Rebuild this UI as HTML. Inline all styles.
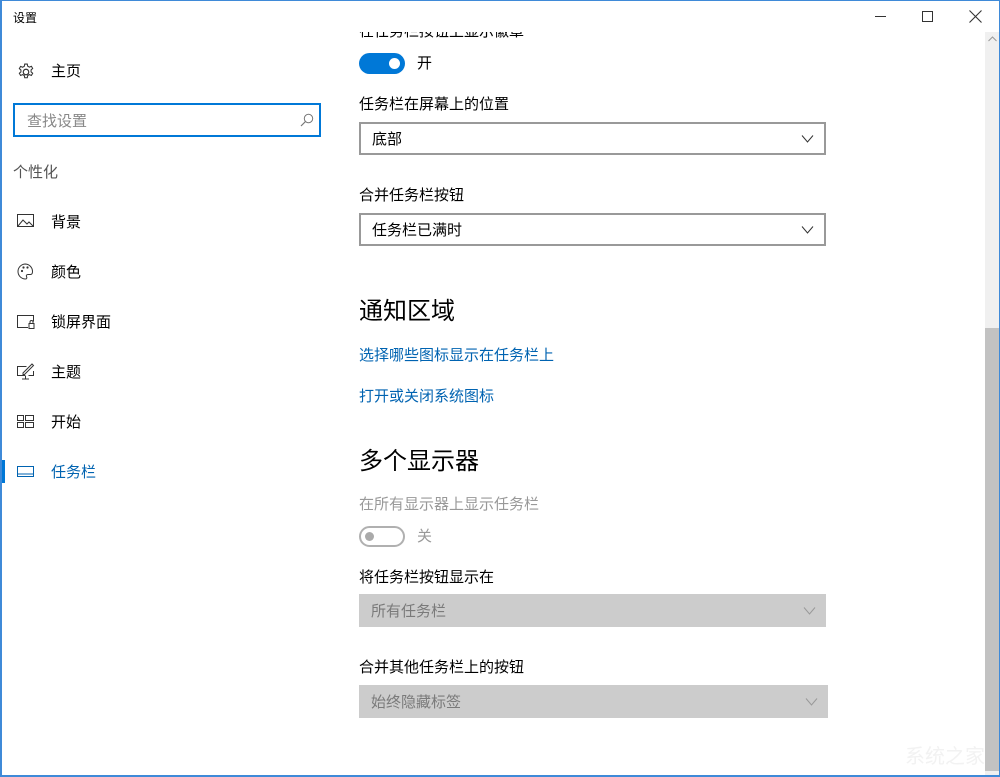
<!DOCTYPE html>
<html><head><meta charset="utf-8"><style>
*{margin:0;padding:0;box-sizing:border-box}
body{width:1000px;height:777px;overflow:hidden;background:#fff;font-family:"Liberation Sans","Noto Sans CJK SC",sans-serif;color:#000;position:relative}
.frame{position:absolute;left:0;top:0;width:1000px;height:777px;border:1px solid #3f8ad8;border-left-width:2px;border-bottom-width:2px;z-index:10;pointer-events:none}
.a{position:absolute;white-space:nowrap}
.t15{font-size:15px;line-height:20px}
.nav{font-size:15px;line-height:20px;left:51px}
.ic{position:absolute;left:17px}
.dd{position:absolute;left:359px;width:467px;height:33px;border:2px solid #999;background:#fff;font-size:15px;line-height:31px;padding-left:11px}
.dd.dis{border:none;background:#ccc;color:#7a7a7a;line-height:35px;padding-left:12px}
.chev{position:absolute;right:10px;top:10px;width:10px;height:10px}
.link{color:#0063b1;font-size:15px}
.h{font-size:24px;line-height:30px}
</style></head><body>
<div class="frame"></div>
<div class="a" style="left:13px;top:9px;font-size:12px;color:#000">设置</div>
<div class="a" style="left:875px;top:16px;width:11px;height:1px;background:#333"></div>
<div class="a" style="left:922px;top:11px;width:11px;height:11px;border:1px solid #333"></div>
<svg class="a" style="left:969px;top:10px" width="13" height="13"><path d="M0.5 0.5L12.5 12.5M12.5 0.5L0.5 12.5" stroke="#333" stroke-width="1.1"/></svg>
<svg class="ic" style="top:63px" width="18" height="18" viewBox="0 0 17 17"><circle cx="8.5" cy="8.5" r="2.6" fill="none" stroke="#333" stroke-width="1.1"/><path d="M7.3 1h2.4l.4 2 1.6.9 1.9-.8 1.2 2.1-1.5 1.3v1.9l1.5 1.3-1.2 2.1-1.9-.8-1.6.9-.4 2H7.3l-.4-2-1.6-.9-1.9.8-1.2-2.1 1.5-1.3V6.6L2.2 5.3l1.2-2.1 1.9.8 1.6-.9z" fill="none" stroke="#333" stroke-width="1"/></svg>
<div class="a nav" style="top:62px">主页</div>
<div class="a" style="left:13px;top:103px;width:308px;height:34px;border:2px solid #0078d7"></div>
<div class="a" style="left:27px;top:110px;font-size:15px;color:#888">查找设置</div>
<svg class="a" style="left:300px;top:113px" width="14" height="14"><circle cx="8.5" cy="5.5" r="4.2" fill="none" stroke="#777" stroke-width="1"/><path d="M5.5 8.5L1 13" stroke="#777" stroke-width="1.2"/></svg>
<div class="a t15" style="left:13px;top:163px;color:#555">个性化</div>
<svg class="ic" style="top:214px" width="17" height="14"><rect x="0.5" y="0.5" width="16" height="12" fill="none" stroke="#333"/><path d="M1 12L6 6l4 4 2-2 4 4" fill="none" stroke="#333"/></svg>
<div class="a nav" style="top:213px">背景</div>
<svg class="ic" style="top:263px" width="17" height="17"><path d="M8.5 1a7.5 7.5 0 1 0 0 15c1.5 0 1.5-1.5 1-2.5s0-2 1.5-2h2.5c1.5 0 2-1.3 2-3A7.5 7.5 0 0 0 8.5 1z" fill="none" stroke="#333"/><circle cx="5" cy="8" r="1.1" fill="#333"/><circle cx="6.5" cy="4.5" r="1.1" fill="#333"/><circle cx="10.5" cy="4.5" r="1.1" fill="#333"/></svg>
<div class="a nav" style="top:263px">颜色</div>
<svg class="ic" style="top:315px" width="18" height="14"><path d="M11 12.5H0.5V0.5h16v6" fill="none" stroke="#333"/><rect x="12" y="8.5" width="5" height="5" fill="none" stroke="#333"/><path d="M13 8.5V7a1.5 1.5 0 0 1 3 0v1.5" fill="none" stroke="#333"/></svg>
<div class="a nav" style="top:313px">锁屏界面</div>
<svg class="ic" style="top:363px" width="18" height="17"><path d="M8 12.5H0.5V3.5h9M16.5 8v4.5h-5M5 16h7M8.5 12.5V16" fill="none" stroke="#333"/><path d="M6 10l9-9 1.5 1.5-9 9H6z" fill="none" stroke="#333"/></svg>
<div class="a nav" style="top:363px">主题</div>
<svg class="ic" style="top:415px" width="17" height="13"><rect x="0.5" y="0.5" width="6" height="5" fill="none" stroke="#333"/><rect x="8.5" y="0.5" width="8" height="5" fill="none" stroke="#333"/><rect x="0.5" y="7.5" width="6" height="5" fill="none" stroke="#333"/><rect x="8.5" y="7.5" width="8" height="5" fill="none" stroke="#333"/></svg>
<div class="a nav" style="top:413px">开始</div>
<div class="a" style="left:0;top:460px;width:5px;height:23px;background:#0078d7"></div>
<svg class="ic" style="top:466px" width="17" height="11"><rect x="0.5" y="0.5" width="16" height="10" fill="none" stroke="#0063b1"/><path d="M1 8h15" stroke="#0063b1"/></svg>
<div class="a nav" style="top:463px;color:#0063b1">任务栏</div>
<div class="a" style="left:340px;top:32px;width:640px;height:20px;overflow:hidden"><div class="a t15" style="left:19px;top:-10px">在任务栏按钮上显示徽章</div></div>
<div class="a" style="left:359px;top:53px;width:46px;height:21px;border-radius:11px;background:#0078d7"></div>
<div class="a" style="left:389px;top:58px;width:11px;height:11px;border-radius:50%;background:#fff"></div>
<div class="a t15" style="left:417px;top:54px">开</div>
<div class="a t15" style="left:359px;top:95px">任务栏在屏幕上的位置</div>
<div class="dd" style="top:122px">底部<svg class="chev" viewBox="0 0 12 8" style="width:13px;height:8px;top:11px"><path d="M0.5 0.5L6 7 11.5 0.5" fill="none" stroke="#333"/></svg></div>
<div class="a t15" style="left:359px;top:186px">合并任务栏按钮</div>
<div class="dd" style="top:213px">任务栏已满时<svg class="chev" viewBox="0 0 12 8" style="width:13px;height:8px;top:11px"><path d="M0.5 0.5L6 7 11.5 0.5" fill="none" stroke="#333"/></svg></div>
<div class="a h" style="left:359px;top:297px">通知区域</div>
<div class="a link" style="left:359px;top:344px">选择哪些图标显示在任务栏上</div>
<div class="a link" style="left:359px;top:385px">打开或关闭系统图标</div>
<div class="a h" style="left:359px;top:447px">多个显示器</div>
<div class="a t15" style="left:359px;top:495px;color:#999">在所有显示器上显示任务栏</div>
<div class="a" style="left:359px;top:526px;width:46px;height:21px;border-radius:11px;border:2px solid #b0b0b0"></div>
<div class="a" style="left:365px;top:532px;width:9px;height:9px;border-radius:50%;background:#aaa"></div>
<div class="a t15" style="left:417px;top:527px;color:#999">关</div>
<div class="a t15" style="left:359px;top:568px">将任务栏按钮显示在</div>
<div class="dd dis" style="top:594px;width:467px">所有任务栏<svg class="chev" viewBox="0 0 12 8" style="width:13px;height:8px;top:13px"><path d="M0.5 0.5L6 7 11.5 0.5" fill="none" stroke="#999"/></svg></div>
<div class="a t15" style="left:359px;top:658px">合并其他任务栏上的按钮</div>
<div class="dd dis" style="top:685px;width:469px">始终隐藏标签<svg class="chev" viewBox="0 0 12 8" style="width:13px;height:8px;top:13px"><path d="M0.5 0.5L6 7 11.5 0.5" fill="none" stroke="#999"/></svg></div>
<div class="a" style="left:985px;top:32px;width:14px;height:743px;background:#f0f0f0"></div>
<svg class="a" style="left:988px;top:36px" width="9" height="6"><path d="M0.5 5L4.5 1 8.5 5" fill="none" stroke="#999"/></svg>
<div class="a" style="left:985px;top:328px;width:14px;height:443px;background:#c2c2c2"></div>
<div class="a" style="left:905px;top:740px;font-size:20px;color:#f2f2f2">系统之家</div>
</body></html>
